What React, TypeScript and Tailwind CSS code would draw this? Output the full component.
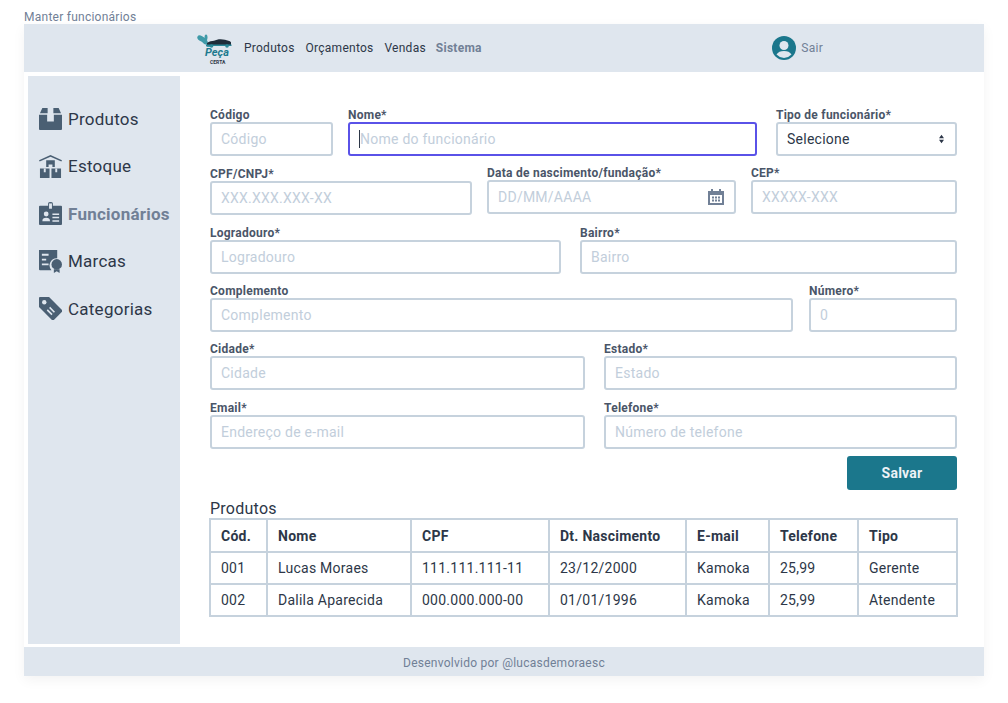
import { ReactNode } from "react";

const Field = ({
  label,
  placeholder,
  className,
  focused,
  children,
}: {
  label: string;
  placeholder?: string;
  className: string;
  focused?: boolean;
  children?: ReactNode;
}) => (
  <div className={className}>
    <div className="h-[16px] text-[12px] leading-[16px] font-bold text-[#4a5568]">{label}</div>
    <div
      className={
        "relative -mt-[1px] flex h-[34px] items-center rounded-[3px] border-2 bg-white px-[9px] text-[14px] text-[#c2cedb] " +
        (focused ? "border-[#5a52e8]" : "border-[#c6d2dd]")
      }
    >
      {focused && <span className="h-[18px] w-px bg-[#2d3748]" />}
      {placeholder}
      {children}
    </div>
  </div>
);

const BoxIcon = () => (
  <svg viewBox="0 0 24 24" className="h-[23px] w-[23px] fill-[#4a5f73]">
    <path d="M0 8h8.500v7h7V8H24v15a1 1 0 0 1-1 1H1a1 1 0 0 1-1-1z" />
    <path d="M1 6.500 3.500 1h5.500v5.500zM15 1h5.500L23 6.500h-8z" />
  </svg>
);

const StockIcon = () => (
  <svg viewBox="0 0 24 24" className="h-[23px] w-[23px] fill-[#4a5f73]">
    <path d="M12 0 24 5.500 23.300 6.800 12 1.800 .7 6.800 0 5.500z" />
    <path d="M7.500 5.500h9v7h-2.500v-2.500h-4v2.500h-2.500z" />
    <path d="M1 14h10v10H1zM13 14h10v10H13z" />
    <path d="M5 14h2v4H5zM17 14h2v4h-2z" fill="#dfe6ee" />
  </svg>
);

const BadgeIcon = () => (
  <svg viewBox="0 0 24 24" className="h-[23px] w-[23px] fill-[#4a5f73]">
    <path d="M0 5a1 1 0 0 1 1-1h8.500V1.500a2.500 1.500 0 0 1 5 0V4H23a1 1 0 0 1 1 1v18a1 1 0 0 1-1 1H1a1 1 0 0 1-1-1z" />
    <path d="M10.500 1.500h3V7h-3z" fill="#dfe6ee" />
    <circle cx="7.500" cy="12.500" r="2.500" fill="#dfe6ee" />
    <path d="M3.500 20c0-2.500 1.500-3.500 4-3.500s4 1 4 3.500zM14 12h7v1.500h-7zM14 15.500h7V17h-7zM14 19h7v1.500h-7z" fill="#dfe6ee" />
  </svg>
);

const BrandIcon = () => (
  <svg viewBox="0 0 24 24" className="h-[23px] w-[23px] fill-[#4a5f73]">
    <path d="M0 0h19v8.500a7.500 7.500 0 0 0-6 12.500H1a1 1 0 0 1-1-1z" />
    <path d="M3 4h7v2H3zM3 9h4.500v2H3zM3 14h7v2H3z" fill="#dfe6ee" />
    <circle cx="18.500" cy="15" r="5.500" />
    <path d="M15.500 20h6v4l-3-1.800-3 1.800z" />
  </svg>
);

const TagIcon = () => (
  <svg viewBox="0 0 24 24" className="h-[23px] w-[23px] fill-[#4a5f73]">
    <path d="M1 0h9.500L24 13.500a1.500 1.500 0 0 1 0 2L15.500 24a1.500 1.500 0 0 1-2 0L0 10.500V1a1 1 0 0 1 1-1z" />
    <circle cx="5.500" cy="5.500" r="2.300" fill="#dfe6ee" />
    <path d="m10.500 11.500 1.200-1.200 5 5-1.200 1.200zM8 14l1.200-1.200 5 5L13 19z" fill="#dfe6ee" />
  </svg>
);

const menu = [
  { name: "Produtos", icon: <BoxIcon /> },
  { name: "Estoque", icon: <StockIcon /> },
  { name: "Funcionários", icon: <BadgeIcon />, active: true },
  { name: "Marcas", icon: <BrandIcon /> },
  { name: "Categorias", icon: <TagIcon /> },
];

const headers = ["Cód.", "Nome", "CPF", "Dt. Nascimento", "E-mail", "Telefone", "Tipo"];
const rows = [
  ["001", "Lucas Moraes", "111.111.111-11", "23/12/2000", "Kamoka", "25,99", "Gerente"],
  ["002", "Dalila Aparecida", "000.000.000-00", "01/01/1996", "Kamoka", "25,99", "Atendente"],
];

export default function App() {
  return (
    <div className="h-[703px] w-[1008px] overflow-hidden bg-white pl-[24px] font-['Roboto',sans-serif] tracking-[0.25px]">
      <div className="h-[24px] pt-[9px] text-[12px] leading-[16px] text-[#718096]">Manter funcionários</div>
      <div className="w-[960px] shadow-[0_4px_12px_rgba(0,0,0,0.05)]">
        {/* Header */}
        <header className="flex h-[48px] items-center bg-[#dfe6ee] pl-[172px]">
          <div className="relative h-[36px] w-[40px]">
            <svg viewBox="0 0 40 22" className="absolute left-0 top-0 h-[22px] w-[40px]">
              <ellipse cx="5" cy="8.500" rx="4" ry="2.500" fill="#3f9aa8" transform="rotate(30 5 8.500)" />
              <ellipse cx="8.500" cy="11" rx="4" ry="2.500" fill="#3f9aa8" transform="rotate(50 8.500 11)" />
              <ellipse cx="10" cy="7.500" rx="1.500" ry="3" fill="#3f9aa8" />
              <ellipse cx="13" cy="15.500" rx="3" ry="1.500" fill="#3f9aa8" />
              <path d="M11 13c2-1.500 5-2 7-2.200 3-2 8-2 11-1 2 .5 5 1 6 2.500V15H11z" fill="#1f2d3a" />
              <path d="M10 14.500h25.500V16H10z" fill="#2b8797" />
              <circle cx="15.500" cy="16" r="1.800" fill="#2b8797" />
              <circle cx="31" cy="16" r="1.800" fill="#2b8797" />
            </svg>
            <span className="absolute left-[9px] top-[17px] text-[11px] leading-[12px] font-bold italic tracking-normal text-[#1c7a8e]">
              Peça
            </span>
            <span className="absolute left-[14px] top-[29px] text-[5px] leading-[6px] font-bold tracking-normal text-[#2d3748]">
              CERTA
            </span>
          </div>
          <nav className="ml-[8px] flex gap-[11px] text-[12px] leading-[16px] text-[#2d3748]">
            <span>Produtos</span>
            <span>Orçamentos</span>
            <span>Vendas</span>
            <span className="-ml-[1px] font-bold text-[#718096]">Sistema</span>
          </nav>
          <div className="ml-auto mr-[161px] flex items-center gap-[5px]">
            <svg viewBox="0 0 24 24" className="h-[24px] w-[24px]">
              <circle cx="12" cy="12" r="12" fill="#1b778c" />
              <circle cx="12" cy="9.500" r="4.500" fill="#dfe6ee" />
              <path d="M4.500 18.500c1.500-2.500 4-3.500 7.500-3.500s6 1 7.500 3.500A11 11 0 0 1 12 22a11 11 0 0 1-7.500-3.500z" fill="#dfe6ee" />
            </svg>
            <span className="text-[12px] leading-[16px] text-[#718096]">Sair</span>
          </div>
        </header>

        <div className="flex h-[575px] pt-[4px]">
          {/* Sidebar */}
          <aside className="ml-[4px] flex h-[568px] w-[152px] flex-col gap-[23.500px] bg-[#dfe6ee] pl-[11px] pt-[30.900px]">
            {menu.map((m) => (
              <div key={m.name} className="flex h-[24px] items-center gap-[6px]">
                {m.icon}
                <span
                  className={
                    "text-[17px] leading-[24px] " +
                    (m.active ? "font-bold text-[#718096]" : "text-[#2d3748]")
                  }
                >
                  {m.name}
                </span>
              </div>
            ))}
          </aside>

          {/* Form */}
          <main className="ml-[30px] w-[747px] pt-[31px]">
            <div className="flex">
              <Field className="w-[123px]" label="Código" placeholder="Código" />
              <Field className="ml-[15px] w-[409px]" label="Nome*" placeholder="Nome do funcionário" focused />
              <Field className="ml-[19px] w-[181px]" label="Tipo de funcionário*">
                <span className="text-[#2d3748]">Selecione</span>
                <svg viewBox="0 0 8 12" className="absolute right-[10px] top-[10px] h-[10px] w-[7px] fill-[#2d3748]">
                  <path d="M4 1 7 5H1zM4 11 1 7h6z" />
                </svg>
              </Field>
            </div>
            <div className="mt-[9px] flex">
              <Field className="mt-[1px] w-[262px]" label="CPF/CNPJ*" placeholder="XXX.XXX.XXX-XX" />
              <Field className="ml-[15px] w-[249px]" label="Data de nascimento/fundação*" placeholder="DD/MM/AAAA">
                <svg viewBox="0 0 16 16" className="absolute right-[10px] top-[7px] h-[16px] w-[16px] fill-[#718096]">
                  <path d="M3 0h2v2h6V0h2v2h3v14H0V2h3zM2 6v8h12V6z" />
                  <path d="M4 7.500h2v2H4zM7 7.500h2v2H7zM10 7.500h2v2h-2zM4 10.500h2v2H4zM7 10.500h2v2H7zM10 10.500h2v2h-2z" />
                </svg>
              </Field>
              <Field className="ml-[15px] w-[206px]" label="CEP*" placeholder="XXXXX-XXX" />
            </div>
            <div className="mt-[10px] flex">
              <Field className="w-[351px]" label="Logradouro*" placeholder="Logradouro" />
              <Field className="ml-[19px] w-[377px]" label="Bairro*" placeholder="Bairro" />
            </div>
            <div className="mt-[9px] flex">
              <Field className="w-[583px]" label="Complemento" placeholder="Complemento" />
              <Field className="ml-[16px] w-[148px]" label="Número*" placeholder="0" />
            </div>
            <div className="mt-[9px] flex">
              <Field className="w-[375px]" label="Cidade*" placeholder="Cidade" />
              <Field className="ml-[19px] w-[353px]" label="Estado*" placeholder="Estado" />
            </div>
            <div className="mt-[10px] flex">
              <Field className="w-[375px]" label="Email*" placeholder="Endereço de e-mail" />
              <Field className="ml-[19px] w-[353px]" label="Telefone*" placeholder="Número de telefone" />
            </div>
            <div className="mt-[7px] flex justify-end">
              <button className="h-[34px] w-[110px] rounded-[3px] bg-[#1b778c] text-[14px] font-bold text-[#edf2f7]">
                Salvar
              </button>
            </div>
            <div className="mt-[8px] h-[20px] text-[16px] leading-[21px] text-[#2d3748]">Produtos</div>
            <table className="-ml-[1px] w-[747px] table-fixed border-collapse border-2 border-[#c6d2dd] text-[14px] leading-[20px] text-[#2d3748]">
              <colgroup>
                <col className="w-[57px]" />
                <col className="w-[144px]" />
                <col className="w-[138px]" />
                <col className="w-[137px]" />
                <col className="w-[83px]" />
                <col className="w-[89px]" />
                <col className="w-[99px]" />
              </colgroup>
              <thead>
                <tr className="h-[33px]">
                  {headers.map((h) => (
                    <th key={h} className="border-2 border-[#c6d2dd] pl-[10px] text-left font-bold">
                      {h}
                    </th>
                  ))}
                </tr>
              </thead>
              <tbody>
                {rows.map((r) => (
                  <tr key={r[0]} className="h-[32px]">
                    {r.map((c, i) => (
                      <td key={i} className="border-2 border-[#c6d2dd] pl-[10px]">
                        {c}
                      </td>
                    ))}
                  </tr>
                ))}
              </tbody>
            </table>
          </main>
        </div>

        {/* Footer */}
        <footer className="flex h-[29px] items-center justify-center bg-[#dfe6ee] pt-[2px] text-[12px] text-[#718096]">
          Desenvolvido por @lucasdemoraesc
        </footer>
      </div>
    </div>
  );
}
